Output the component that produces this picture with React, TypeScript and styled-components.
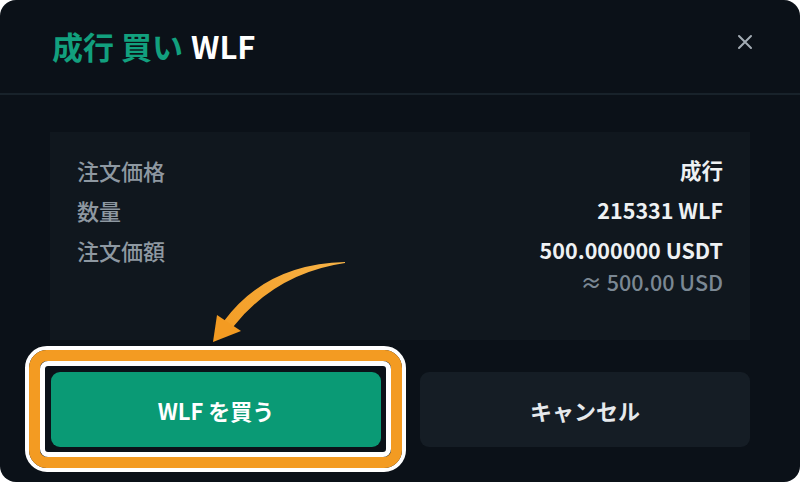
import React from "react";
import styled, { createGlobalStyle } from "styled-components";

const Global = createGlobalStyle`
  html, body { margin: 0; padding: 0; background: #ffffff; }
  body { font-family: "Noto Sans CJK JP", "Noto Sans", sans-serif; }
  * { box-sizing: border-box; }
`;

const Modal = styled.div`
  position: relative;
  width: 800px;
  height: 482px;
  background: #0b1118;
  border-radius: 16px;
  overflow: hidden;
  display: flex;
  flex-direction: column;
  font-family: "Noto Sans CJK JP", "Noto Sans", sans-serif;
`;

const Header = styled.div`
  height: 95px;
  padding: 0 46px 2px 52px;
  display: flex;
  align-items: center;
  justify-content: space-between;
  border-bottom: 2px solid #18222a;
`;

const Title = styled.h1`
  margin: 0;
  font-size: 31px;
  font-weight: 700;
  line-height: 1;
  color: #12a07e;
  display: flex;
  gap: 8px;
`;

const TitleSymbol = styled.span`
  color: #ffffff;
`;

const CloseButton = styled.button`
  width: 18px;
  height: 18px;
  padding: 0;
  margin-bottom: 8px;
  border: none;
  background: transparent;
  color: #a3acb4;
  display: flex;
  align-items: center;
  justify-content: center;
`;

const Body = styled.div`
  padding: 37px 50px 0;
  display: flex;
  flex-direction: column;
`;

const InfoBox = styled.div`
  height: 208px;
  background: #10171e;
  padding: 22px 27px;
  display: flex;
  flex-direction: column;
  gap: 8px;
`;

const Row = styled.div`
  display: flex;
  justify-content: space-between;
  align-items: flex-start;
  font-size: 22px;
  line-height: 32px;
`;

const Label = styled.span`
  color: #8e98a1;
  font-weight: 500;
`;

const ValueCol = styled.div`
  display: flex;
  flex-direction: column;
  align-items: flex-end;
`;

const Value = styled.span<{ $muted?: boolean }>`
  color: ${(p) => (p.$muted ? "#7b8894" : "#eef1f3")};
  font-weight: ${(p) => (p.$muted ? 500 : 700)};
  font-size: 21.5px;
`;

const Footer = styled.div`
  margin-top: 32px;
  padding: 0 50px 0 51px;
  display: grid;
  grid-template-columns: 1fr 1fr;
  gap: 39px;
`;

const ButtonWrap = styled.div`
  position: relative;
`;

const ActionButton = styled.button<{ $primary?: boolean }>`
  width: 100%;
  height: 75px;
  border: none;
  border-radius: 9px;
  background: ${(p) => (p.$primary ? "#0a9a75" : "#151d25")};
  color: ${(p) => (p.$primary ? "#ffffff" : "#e6e9ec")};
  font-family: "Noto Sans CJK JP", "Noto Sans", sans-serif;
  font-size: 22px;
  font-weight: 700;
  display: flex;
  align-items: center;
  justify-content: center;
`;

const Highlight = styled.span`
  position: absolute;
  top: -26px;
  left: -26px;
  right: -25px;
  bottom: -25px;
  border: 4px solid #ffffff;
  border-radius: 22px;
  pointer-events: none;
  &::before {
    content: "";
    position: absolute;
    inset: 0;
    border: 11px solid #f39b22;
    border-radius: 18px;
  }
  &::after {
    content: "";
    position: absolute;
    inset: 11px;
    border: 5px solid #ffffff;
    border-radius: 8px;
  }
`;

const Arrow = styled.svg`
  position: absolute;
  left: 200px;
  top: 255px;
  width: 155px;
  height: 95px;
  pointer-events: none;
`;

export default function App() {
  return (
    <>
      <Global />
      <Modal>
        <Header>
          <Title>
            <span>成行 買い</span>
            <TitleSymbol>WLF</TitleSymbol>
          </Title>
          <CloseButton aria-label="close">
            <svg width="16" height="16" viewBox="0 0 16 16">
              <path d="M2 2 L14 14 M14 2 L2 14" stroke="currentColor" strokeWidth="2" strokeLinecap="round" />
            </svg>
          </CloseButton>
        </Header>
        <Body>
          <InfoBox>
            <Row>
              <Label>注文価格</Label>
              <Value>成行</Value>
            </Row>
            <Row>
              <Label>数量</Label>
              <Value>215331 WLF</Value>
            </Row>
            <Row>
              <Label>注文価額</Label>
              <ValueCol>
                <Value>500.000000 USDT</Value>
                <Value $muted>≈ 500.00 USD</Value>
              </ValueCol>
            </Row>
          </InfoBox>
        </Body>
        <Footer>
          <ButtonWrap>
            <ActionButton $primary>WLF を買う</ActionButton>
            <Highlight />
          </ButtonWrap>
          <ButtonWrap>
            <ActionButton>キャンセル</ActionButton>
          </ButtonWrap>
        </Footer>
        <Arrow viewBox="200 255 155 95">
          <defs>
            <linearGradient id="arrowGrad" x1="345" y1="262" x2="215" y2="342" gradientUnits="userSpaceOnUse">
              <stop offset="0" stopColor="#f7b347" />
              <stop offset="1" stopColor="#f39b22" />
            </linearGradient>
          </defs>
          <path
            d="M345 262 Q266 264 224 321 L233 327 Q276 273 345 263 Z"
            fill="url(#arrowGrad)"
          />
          <path d="M213 342 L217 315 L241 331 Z" fill="#f39b22" />
        </Arrow>
      </Modal>
    </>
  );
}
